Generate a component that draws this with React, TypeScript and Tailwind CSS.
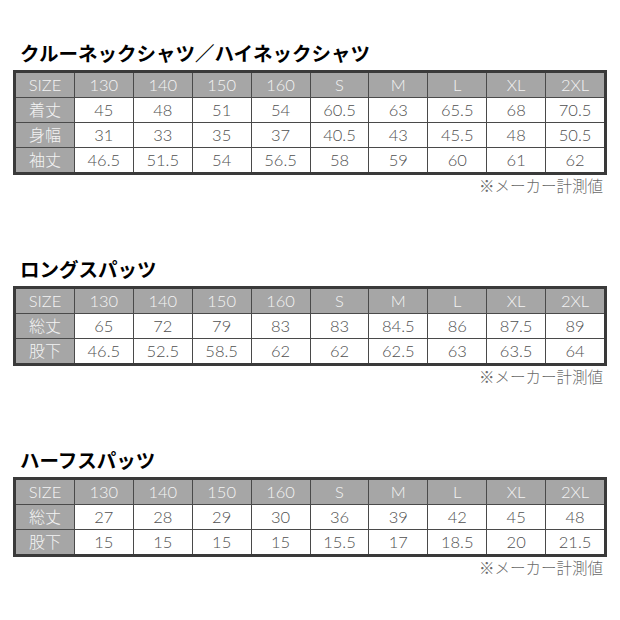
import React from "react";

type Table = { title: string; rows: [string, string[]][] };

const sizes = ["130", "140", "150", "160", "S", "M", "L", "XL", "2XL"];

const tables: Table[] = [
  {
    title: "クルーネックシャツ／ハイネックシャツ",
    rows: [
      ["着丈", ["45", "48", "51", "54", "60.5", "63", "65.5", "68", "70.5"]],
      ["身幅", ["31", "33", "35", "37", "40.5", "43", "45.5", "48", "50.5"]],
      ["袖丈", ["46.5", "51.5", "54", "56.5", "58", "59", "60", "61", "62"]],
    ],
  },
  {
    title: "ロングスパッツ",
    rows: [
      ["総丈", ["65", "72", "79", "83", "83", "84.5", "86", "87.5", "89"]],
      ["股下", ["46.5", "52.5", "58.5", "62", "62", "62.5", "63", "63.5", "64"]],
    ],
  },
  {
    title: "ハーフスパッツ",
    rows: [
      ["総丈", ["27", "28", "29", "30", "36", "39", "42", "45", "48"]],
      ["股下", ["15", "15", "15", "15", "15.5", "17", "18.5", "20", "21.5"]],
    ],
  },
];

const font = { fontFamily: "Lato, 'Noto Sans CJK JP', sans-serif" };

function SizeTable({ t, first }: { t: Table; first: boolean }) {
  return (
    <section className={first ? "" : "mt-[61px]"}>
      <h2
        className="h-[24px] pl-[7px] text-[19.5px] leading-[24px] font-bold text-black"
        style={{ fontFamily: "'Noto Sans CJK JP', sans-serif" }}
      >
        {t.title}
      </h2>
      <div className="mt-[5px] grid w-[594px] grid-cols-[repeat(10,1fr)] gap-px border-[3px] border-[#3a3a3a] bg-[#4a4a4a]">
        <div className="flex h-[24px] items-center justify-center bg-[#a6a6a6] text-[16.5px] font-light text-[#f4f4f4]">
          SIZE
        </div>
        {sizes.map((s) => (
          <div
            key={s}
            className="flex h-[24px] items-center justify-center bg-[#a6a6a6] text-[16.5px] font-light text-[#f4f4f4]"
          >
            {s}
          </div>
        ))}
        {t.rows.map(([label, vals]) => (
          <React.Fragment key={label}>
            <div className="flex h-[24px] items-center justify-center bg-[#a6a6a6] text-[16px] font-light text-[#f4f4f4]">
              {label}
            </div>
            {vals.map((v, i) => (
              <div
                key={i}
                className="flex h-[24px] items-center justify-center bg-white text-[16.5px] font-light text-[#505050]"
              >
                {v}
              </div>
            ))}
          </React.Fragment>
        ))}
      </div>
      <div className="mt-px h-[20px] w-[594px] pr-[4px] text-right text-[15.5px] leading-[20px] font-light text-[#6a6a6a]">
        ※メーカー計測値
      </div>
    </section>
  );
}

export default function App() {
  return (
    <div className="min-h-[620px] w-[620px] bg-white pt-[41px] pl-[13px]" style={font}>
      {tables.map((t, i) => (
        <SizeTable key={i} t={t} first={i === 0} />
      ))}
    </div>
  );
}
